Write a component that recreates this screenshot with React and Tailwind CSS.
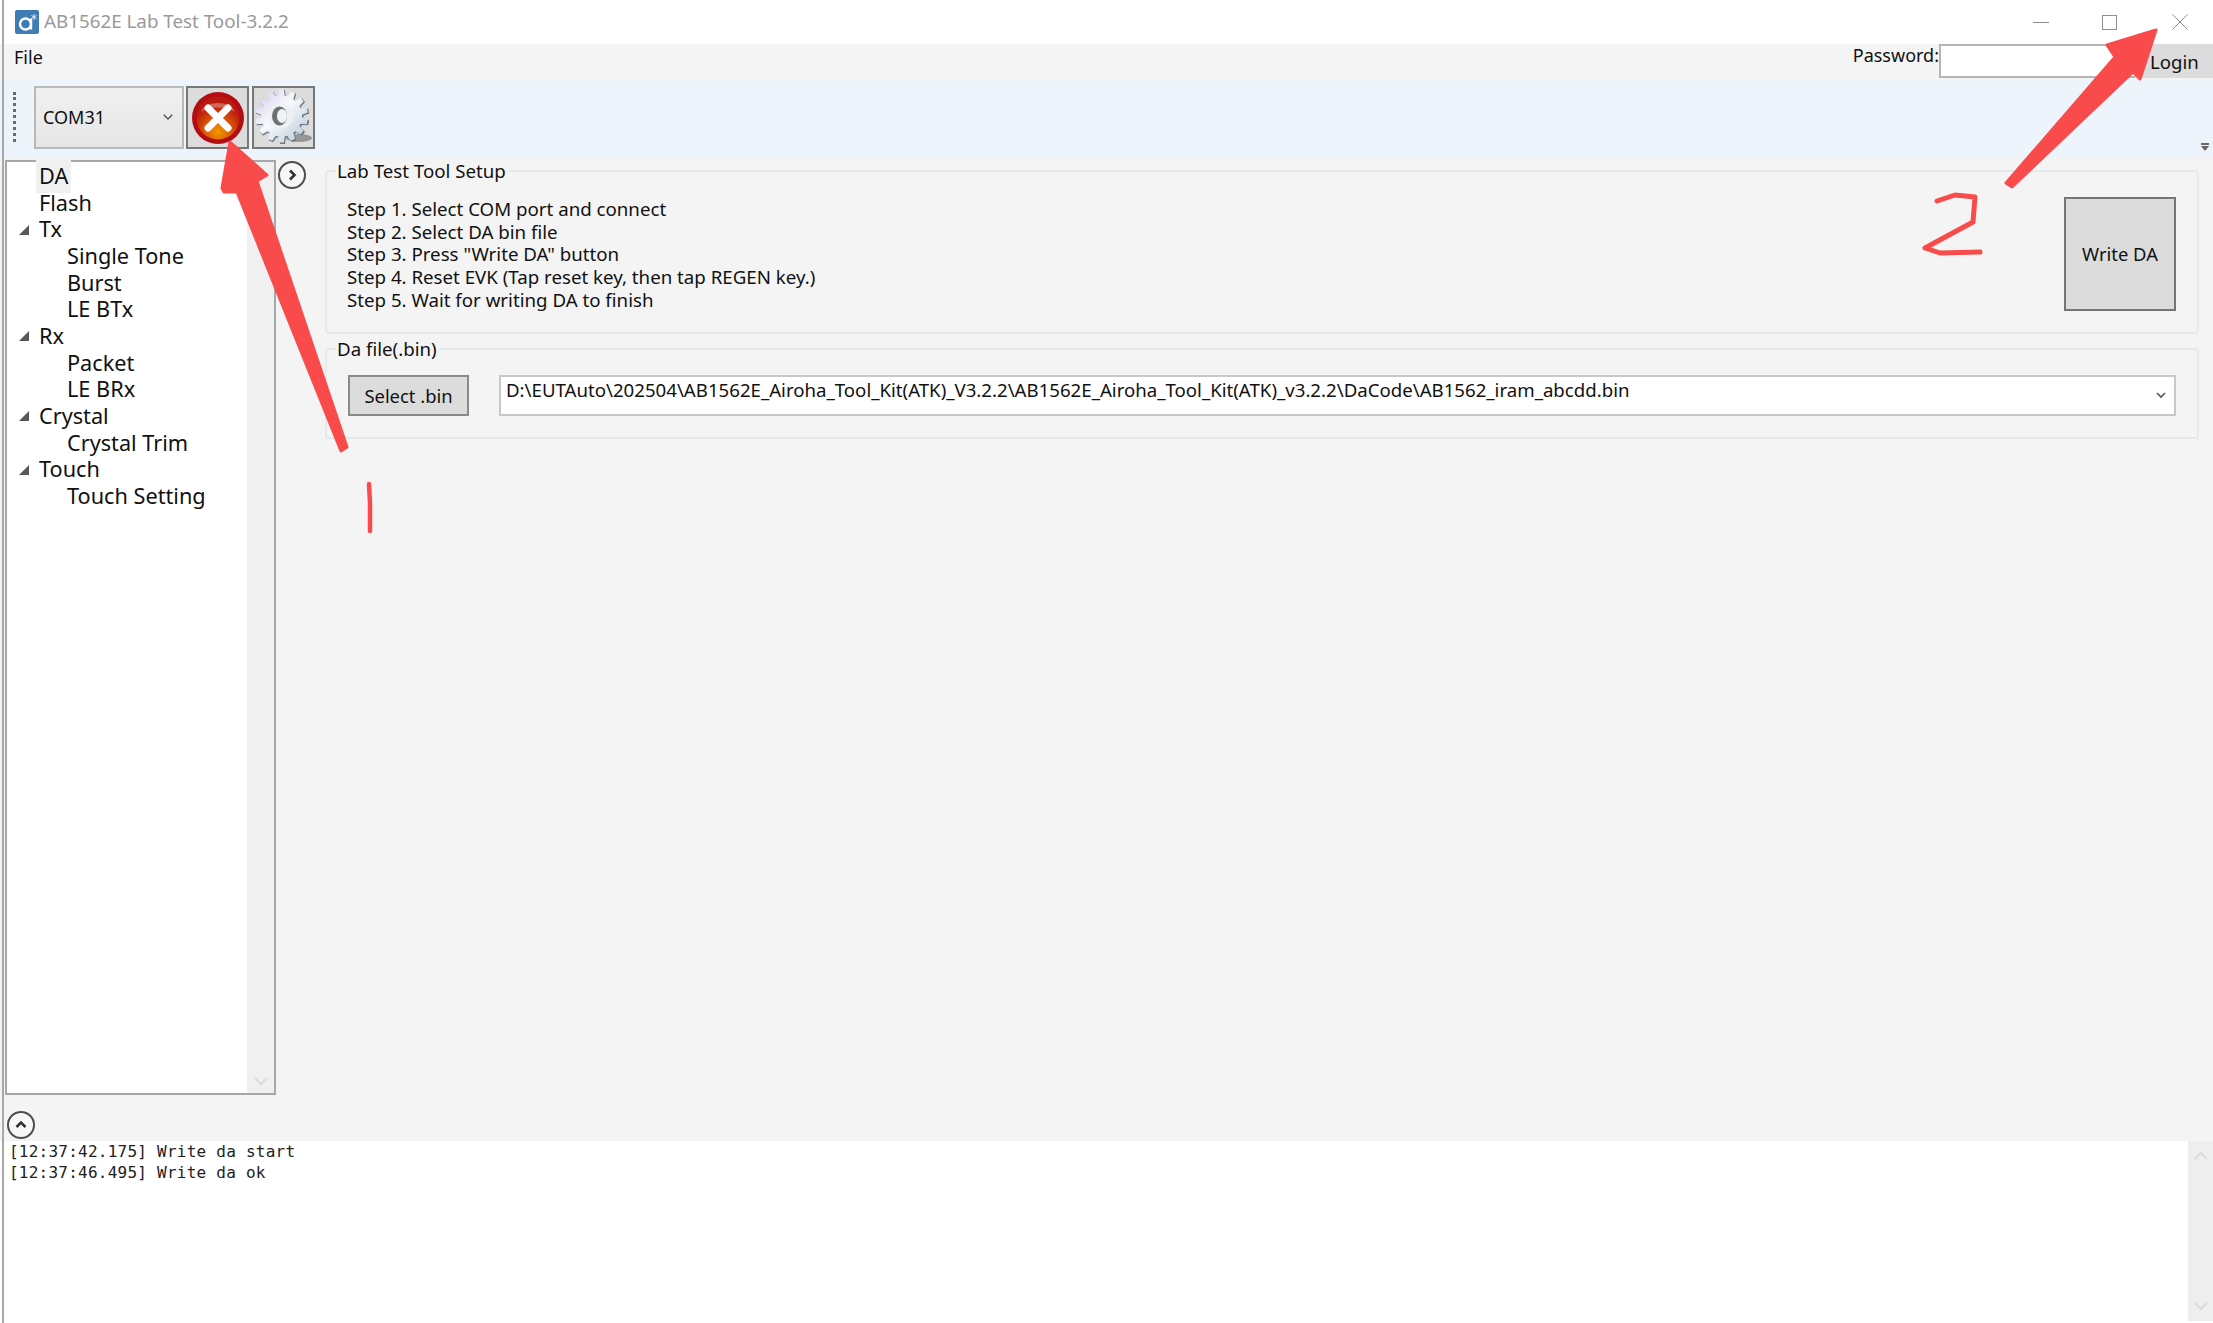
import React from "react";

const ui = { fontFamily: '"Noto Sans", "Open Sans", sans-serif' };

function Logo() {
  return (
    <svg width="24" height="24" viewBox="0 0 24 24" className="shrink-0">
      <rect width="24" height="24" rx="2" fill="#3f7cb5" />
      <circle cx="10.5" cy="14" r="5.5" fill="none" stroke="#fff" strokeWidth="2.4" />
      <path d="M16 8.5V19.5" stroke="#fff" strokeWidth="2.4" />
      <path d="M19 4v6M16.4 5.5l5.2 3M21.6 5.5l-5.2 3" stroke="#dfe9f3" strokeWidth="1" />
    </svg>
  );
}

function StopIcon() {
  return (
    <svg width="54" height="54" viewBox="0 0 54 54">
      <defs>
        <radialGradient id="stopFill" cx="50%" cy="82%" r="62%">
          <stop offset="0%" stopColor="#f09a00" />
          <stop offset="45%" stopColor="#dd5f04" />
          <stop offset="100%" stopColor="#bb1a10" />
        </radialGradient>
      </defs>
      <circle cx="27" cy="27" r="26" fill="#b30c12" />
      <circle cx="27" cy="27" r="21.5" fill="url(#stopFill)" />
      <path d="M10 21C14 9 40 9 44 21C35 15 19 15 10 21Z" fill="#eab0a0" opacity=".5" />
      <path d="M17 17L37 37M37 17L17 37" stroke="#fff" strokeWidth="7" strokeLinecap="round" />
    </svg>
  );
}

function gearPath(cx, cy, rOut, rIn, n) {
  const pts = [];
  const step = (Math.PI * 2) / n;
  for (let i = 0; i < n; i++) {
    const a = i * step - Math.PI / 2;
    const p = (r, o) => `${(cx + r * Math.cos(a + o * step)).toFixed(2)} ${(cy + r * Math.sin(a + o * step)).toFixed(2)}`;
    pts.push(p(rIn, -0.36), p(rOut, -0.2), p(rOut, 0.2), p(rIn, 0.36));
  }
  return `M${pts.join("L")}Z`;
}

function GearIcon() {
  return (
    <svg width="58" height="58" viewBox="0 0 58 58">
      <defs>
        <linearGradient id="gearFill" x1="0" y1="0" x2="1" y2="1">
          <stop offset="0%" stopColor="#cfcbec" />
          <stop offset="45%" stopColor="#f8f9fc" />
          <stop offset="100%" stopColor="#b3c8d6" />
        </linearGradient>
      </defs>
      <ellipse cx="44" cy="49" rx="13" ry="4" fill="#7f7f7f" opacity=".75" />
      <path d={gearPath(27.5, 28, 27, 21, 14)} fill="#6f7886" />
      <path d={gearPath(26.5, 27, 26.5, 20.5, 14)} fill="url(#gearFill)" />
      <circle cx="26" cy="27" r="12.5" fill="#eef0f4" />
      <ellipse cx="24.5" cy="27" rx="7.5" ry="9.5" fill="#6c7076" />
      <ellipse cx="27" cy="27" rx="5" ry="7" fill="#f1f3f6" />
    </svg>
  );
}

function RoundBtn({ up }) {
  return (
    <span className="flex h-[28px] w-[28px] items-center justify-center rounded-full border-2 border-[#4d4d4d] bg-[#f7f7f7]">
      <svg width="14" height="14" viewBox="0 0 14 14">
        <path d={up ? "M2.5 9L7 4.5L11.5 9" : "M5 2.5L9.5 7L5 11.5"} fill="none" stroke="#333" strokeWidth="2.6" />
      </svg>
    </span>
  );
}

function TreeRow({ label, level, expander, selected }) {
  return (
    <div className={`flex h-[26.67px] items-center ${level === 1 ? "pl-[60px]" : "pl-[12px]"}`}>
      {level === 0 && (
        <span className="w-[20px] shrink-0">
          {expander && (
            <svg width="10" height="10" viewBox="0 0 10 10">
              <path d="M0 10H10V0Z" fill="#595959" />
            </svg>
          )}
        </span>
      )}
      <span className={selected ? "-ml-[3px] bg-[#f0f0f0] px-[3px]" : ""}>{label}</span>
    </div>
  );
}

function Chevron({ up, color = "#dcdcdc", w = 14 }) {
  return (
    <svg width={w} height={(w * 9) / 14} viewBox="0 0 14 9">
      <path d={up ? "M1 8L7 2L13 8" : "M1 1L7 7L13 1"} fill="none" stroke={color} strokeWidth="2" />
    </svg>
  );
}

function Group({ title, className, children }) {
  return (
    <fieldset className={`rounded-[4px] border-2 border-[#e4e9ec] ${className}`}>
      <legend className="ml-[8px] px-[2px] text-[18.7px] leading-[22px] text-[#111]">{title}</legend>
      {children}
    </fieldset>
  );
}

const tree = [
  ["DA", 0, false, true],
  ["Flash", 0],
  ["Tx", 0, true],
  ["Single Tone", 1],
  ["Burst", 1],
  ["LE BTx", 1],
  ["Rx", 0, true],
  ["Packet", 1],
  ["LE BRx", 1],
  ["Crystal", 0, true],
  ["Crystal Trim", 1],
  ["Touch", 0, true],
  ["Touch Setting", 1],
];

const steps = [
  "Step 1. Select COM port and connect",
  "Step 2. Select DA bin file",
  'Step 3. Press "Write DA" button',
  "Step 4. Reset EVK (Tap reset key, then tap REGEN key.)",
  "Step 5. Wait for writing DA to finish",
];

export default function App() {
  return (
    <div style={ui} className="relative flex h-[1323px] w-[2213px] flex-col overflow-hidden bg-white text-[#111]">
      <div className="absolute left-[2px] top-0 h-full w-[2px] bg-[#a8a8a8]" />

      {/* title bar */}
      <div className="flex h-[44px] shrink-0 items-center pl-[15px]">
        <Logo />
        <span className="mb-[1px] ml-[5px] text-[18.8px] text-[#9a9a9a]">AB1562E Lab Test Tool-3.2.2</span>
        <div className="ml-auto flex items-center pr-[25px]">
          <span className="h-px w-[16px] bg-[#8f8f8f]" />
          <span className="ml-[53px] h-[15px] w-[15px] border border-[#8f8f8f]" />
          <svg className="ml-[55px]" width="16" height="16" viewBox="0 0 16 16">
            <path d="M.5.5L15.5 15.5M15.5.5L.5 15.5" stroke="#8f8f8f" strokeWidth="1" />
          </svg>
        </div>
      </div>

      {/* menu bar */}
      <div className="flex h-[36px] shrink-0 items-start bg-[#f4f4f4] pl-[14px] text-[18px]">
        <span className="leading-[26px]">File</span>
        <div className="ml-auto flex items-start">
          <span className="leading-[22px]">Password:</span>
          <span className="h-[34px] w-[196px] border-2 border-[#b5b5b5] border-r-0 bg-white" />
          <span className="flex h-[34px] w-[78px] items-center justify-start bg-[#dcdcdc] pl-[15px] pt-[2px] text-[18.6px]">Login</span>
        </div>
      </div>

      {/* toolbar */}
      <div className="flex h-[78px] shrink-0 items-start bg-[#eef4fb] pl-[13px] pt-[6px]">
        <span className="mt-[6px] h-[50px] w-[3px] border-l-[3px] border-dotted border-[#6b6b6b]" />
        <div className="ml-[18px] flex h-[63px] w-[150px] items-center justify-between border-2 border-[#b9b9b9] bg-gradient-to-b from-[#f0f0f0] to-[#e6e6e6] pl-[7px] pr-[9px] text-[18px]">
          <span>COM31</span>
          <Chevron color="#555" w={10} />
        </div>
        <div className="ml-[2px] flex h-[63px] w-[63px] items-center justify-center border-2 border-[#777] bg-[#dcdcdc]">
          <StopIcon />
        </div>
        <div className="ml-[3px] flex h-[63px] w-[63px] items-center justify-center border-2 border-[#777] bg-[#dcdcdc]">
          <GearIcon />
        </div>
        <div className="ml-auto mr-[4px] mt-[57px] flex flex-col items-center">
          <span className="h-[2px] w-[8px] bg-[#666]" />
          <span className="mt-[1px] h-0 w-0 border-x-[4px] border-t-[5px] border-x-transparent border-t-[#666]" />
        </div>
      </div>

      {/* main */}
      <div className="flex min-h-0 flex-1 bg-[#f4f4f4] pl-[5px]">
        <div className="mt-[2px] flex h-[935px] w-[271px] shrink-0 border-2 border-[#a3a8ad] bg-white text-[21.7px]">
          <div className="flex-1 pt-[1px]">
            {tree.map(([l, lv, ex, sel]) => (
              <TreeRow key={l} label={l} level={lv} expander={ex} selected={sel} />
            ))}
          </div>
          <div className="flex w-[27px] flex-col items-center justify-end bg-[#f0f0f0] pb-[7px]">
            <Chevron />
          </div>
        </div>
        <div className="ml-[1px] mt-[3px] flex w-[44px] shrink-0 flex-col">
          <div className="pl-[1px]">
            <RoundBtn />
          </div>
        </div>
        <div className="mr-[14px] flex min-w-0 flex-1 flex-col pl-[4px] pt-[2px]">
          <Group title="Lab Test Tool Setup" className="h-[174px]">
            <div className="flex h-full items-start pl-[20px] pr-[21px]">
              <div className="pt-[16px] text-[18.7px] leading-[22.7px]">
                {steps.map((s) => (
                  <div key={s}>{s}</div>
                ))}
              </div>
              <div className="ml-auto mt-[15px] flex h-[114px] w-[112px] items-center justify-center border-2 border-[#757575] bg-[#dcdcdc] text-[18.4px]">
                Write DA
              </div>
            </div>
          </Group>
          <Group title="Da file(.bin)" className="mt-[4px] h-[101px]">
            <div className="flex items-start gap-[30px] pl-[21px] pr-[21px] pt-[15px]">
              <div className="flex h-[41px] w-[121px] shrink-0 items-center justify-center border-2 border-[#8a8a8a] bg-[#dcdcdc] text-[18.4px]">
                Select .bin
              </div>
              <div className="flex h-[41px] min-w-0 flex-1 items-start justify-between border-2 border-[#c8c8c8] bg-white pl-[5px] pr-[8px] text-[18.65px]">
                <span className="truncate pt-[1px] leading-[24px]">
                  D:\EUTAuto\202504\AB1562E_Airoha_Tool_Kit(ATK)_V3.2.2\AB1562E_Airoha_Tool_Kit(ATK)_v3.2.2\DaCode\AB1562_iram_abcdd.bin
                </span>
                <span className="pt-[15px]">
                  <svg width="10" height="7" viewBox="0 0 10 7">
                    <path d="M1 1L5 5L9 1" fill="none" stroke="#555" strokeWidth="1.6" />
                  </svg>
                </span>
              </div>
            </div>
          </Group>
        </div>
      </div>

      {/* log header + log */}
      <div className="absolute bottom-[184px] left-[7px]">
        <RoundBtn up />
      </div>
      <div className="flex h-[182px] shrink-0 bg-white pb-[2px] pl-[6px]">
        <div style={{ fontFamily: '"DejaVu Sans Mono", monospace' }} className="flex-1 pl-[3px] text-[16px] leading-[21px] tracking-[0.24px] text-[#222]">
          <div>[12:37:42.175] Write da start</div>
          <div>[12:37:46.495] Write da ok</div>
        </div>
        <div className="flex w-[25px] flex-col items-center justify-between bg-[#eeeeee] py-[10px]">
          <Chevron up />
          <Chevron />
        </div>
      </div>

      {/* red annotations drawn over the screenshot */}
      <svg className="pointer-events-none absolute left-0 top-0" width="2213" height="1323" viewBox="0 0 2213 1323">
        <path d="M230 142L267 175L257 181L347 447L341 451L237 192L224 192L222 188Z" fill="#f94b4b" stroke="#f94b4b" strokeWidth="3" strokeLinejoin="round" />
        <path d="M2156 30L2107 45L2115 57L2006 183L2012 187L2133 72L2140 79Z" fill="#f94b4b" stroke="#f94b4b" strokeWidth="3" strokeLinejoin="round" />
        <path d="M1937 201L1955 195L1975 197L1973 222L1925 248L1940 253L1980 252" fill="none" stroke="#f94b4b" strokeWidth="5" strokeLinecap="round" strokeLinejoin="round" />
        <path d="M369 484L370 503L370 531" fill="none" stroke="#f94b4b" strokeWidth="4.5" strokeLinecap="round" />
      </svg>
    </div>
  );
}
